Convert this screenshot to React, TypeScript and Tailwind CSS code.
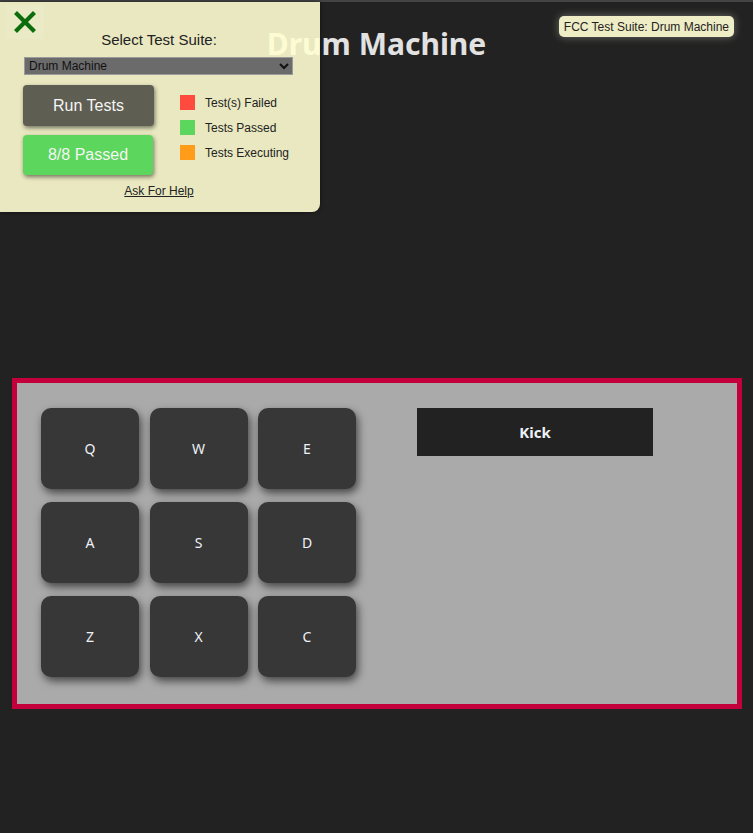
import React from "react";

const pads = ["Q", "W", "E", "A", "S", "D", "Z", "X", "C"];

export default function App() {
  return (
    <div className="relative min-h-[833px] w-full bg-[#222222] overflow-hidden" style={{ fontFamily: '"Noto Sans", sans-serif' }}>
      <div className="h-[2px] w-full bg-[#444444]" />
      <h1 className="text-center text-[30px] font-bold leading-[45px] mt-[19px] text-[#e2e2e2]" style={{ fontFamily: '"Noto Sans", sans-serif' }}>
        Drum Machine
      </h1>

      <div className="ml-[12px] mt-[312px] w-[730px] h-[331px] border-[5px] border-[#c4003c] bg-[#aaaaaa] flex">
        <div className="grid grid-cols-[98px_98px_98px] gap-x-[10.5px] gap-y-[13px] ml-[24px] mt-[25px] self-start">
          {pads.map((p) => (
            <div
              key={p}
              className="h-[81px] rounded-[10px] bg-[#373737] flex items-center justify-center text-[14px] text-[#eef2f8] shadow-[2px_4px_9px_rgba(0,0,0,0.6)]"
            >
              {p}
            </div>
          ))}
        </div>
        <div className="ml-[61px] mt-[25px] w-[236px] h-[48px] bg-[#222222] flex items-center justify-center text-[15px] font-bold text-[#eef2f8]">
          Kick
        </div>
      </div>

      {/* FCC badge */}
      <div
        className="absolute top-[16px] right-[19px] h-[21px] px-[5px] rounded-[5px] bg-[#efedc6] text-[12px] text-[#222] flex items-center shadow-[0_0_8px_rgba(255,255,240,0.35)]"
        style={{ fontFamily: '"Liberation Sans", Arial, sans-serif' }}
      >
        FCC Test Suite: Drum Machine
      </div>

      {/* Test panel */}
      <div
        className="absolute top-[2px] left-0 w-[320px] h-[210px] bg-[rgba(255,254,210,0.9)] rounded-br-[8px] shadow-[0_0_4px_rgba(0,0,0,0.5)] text-[#222]"
        style={{ fontFamily: '"Liberation Sans", Arial, sans-serif' }}
      >
        <div className="absolute left-[6px] top-[3px] w-[38px] h-[34px] bg-[rgba(255,255,255,0.12)] flex items-center justify-center">
          <svg width="22" height="22" viewBox="0 0 22 22">
            <path d="M3 3 L19 19 M19 3 L3 19" stroke="#0b6d0b" strokeWidth="4.2" strokeLinecap="square" />
          </svg>
        </div>
        <div className="absolute left-0 w-[318px] top-[29px] text-center text-[15px] leading-[18px]">Select Test Suite:</div>
        <div className="absolute left-[24px] top-[55px] w-[269px] h-[18px] bg-[#6b6b6b] border border-[#9a9a9a] flex items-center justify-between pl-[4px] pr-[2px] text-[12px] text-[#111]">
          <span>Drum Machine</span>
          <svg width="12" height="10" viewBox="0 0 12 10">
            <path d="M2 3 L6 7 L10 3" stroke="#111" strokeWidth="2" fill="none" />
          </svg>
        </div>
        <div className="absolute left-[23px] top-[83px] w-[131px] h-[41px] rounded-[4px] bg-[#5f5e52] text-[#f5f5f5] text-[16px] flex items-center justify-center shadow-[1px_2px_4px_rgba(0,0,0,0.5)]">
          Run Tests
        </div>
        <div className="absolute left-[23px] top-[133px] w-[130px] h-[40px] rounded-[4px] bg-[#5cd65c] text-[#f5f5f5] text-[16px] flex items-center justify-center shadow-[1px_2px_4px_rgba(0,0,0,0.5)]">
          8/8 Passed
        </div>
        <div className="absolute left-[180px] top-[93px] flex flex-col gap-[10px] text-[12px]">
          <div className="flex items-center gap-[10px] h-[15px]">
            <span className="w-[15px] h-[15px] bg-[#ff4b3e]" />
            <span>Test(s) Failed</span>
          </div>
          <div className="flex items-center gap-[10px] h-[15px]">
            <span className="w-[15px] h-[15px] bg-[#5cd65c]" />
            <span>Tests Passed</span>
          </div>
          <div className="flex items-center gap-[10px] h-[15px]">
            <span className="w-[15px] h-[15px] bg-[#ff9c1a]" />
            <span>Tests Executing</span>
          </div>
        </div>
        <div className="absolute left-0 w-[318px] top-[180px] text-center text-[12px] underline">Ask For Help</div>
      </div>
    </div>
  );
}
